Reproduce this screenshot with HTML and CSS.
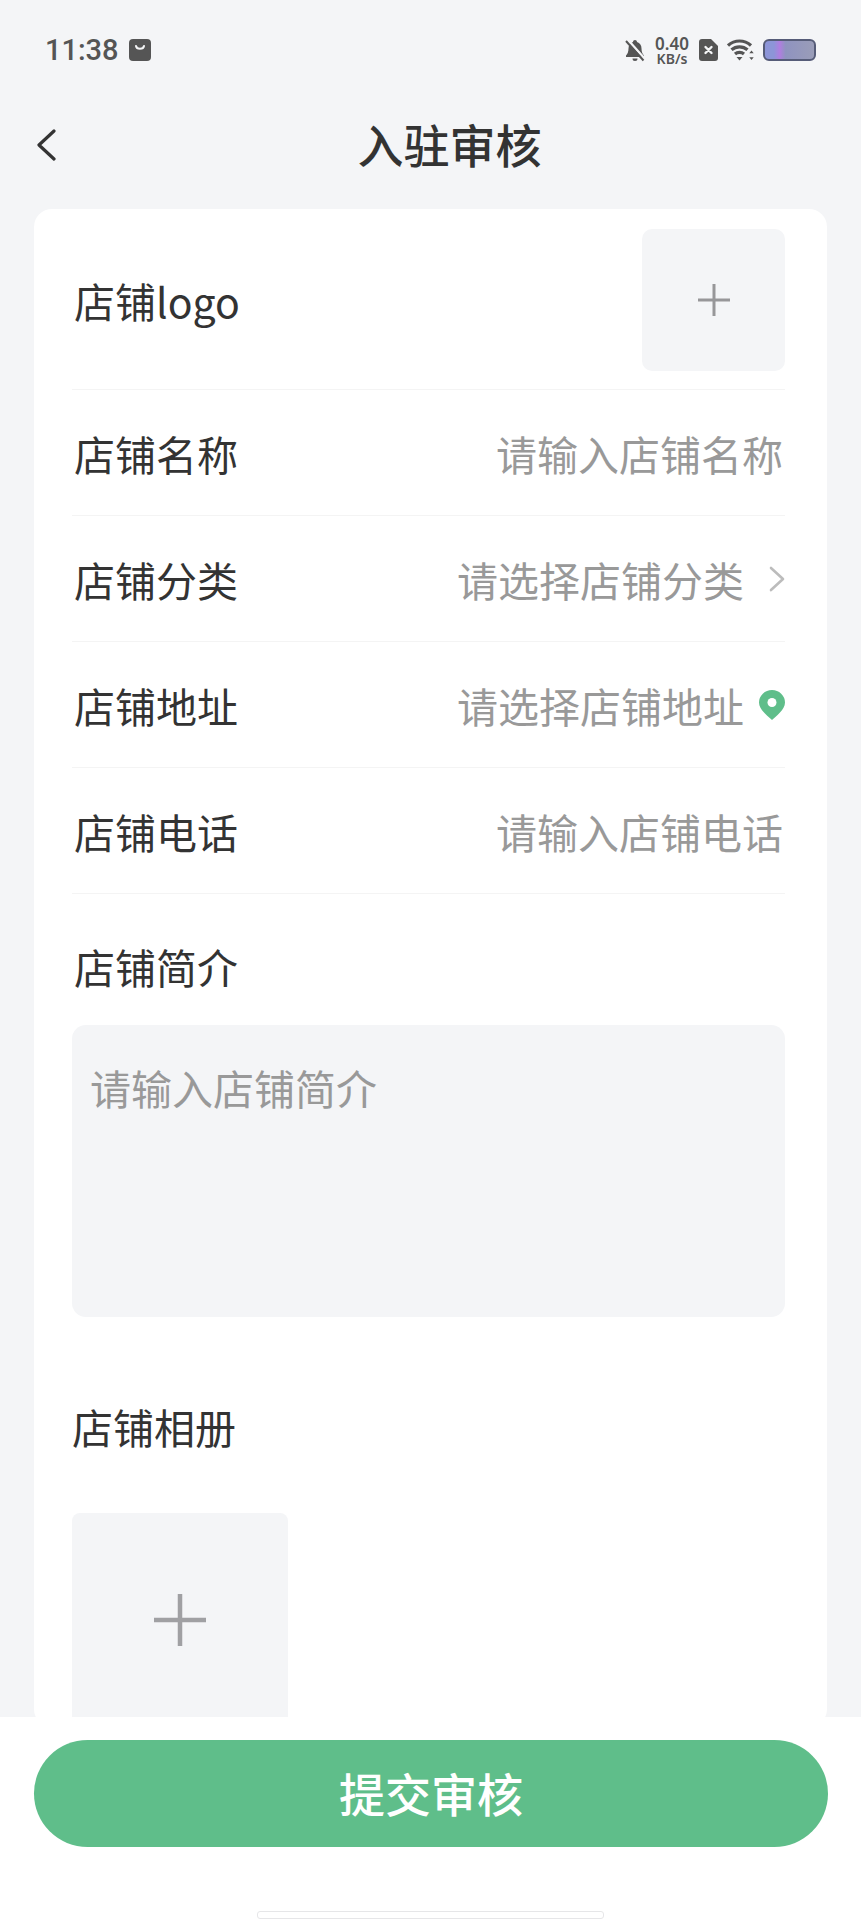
FILE: index.html
```html
<!DOCTYPE html>
<html lang="zh-CN">
<head>
    <meta charset="UTF-8">
    <meta name="viewport" content="width=device-width, initial-scale=1.0">
    <title>入驻审核</title>
    <link rel="stylesheet" href="styles.css">
</head>
<body>
    <div class="page">
        <div class="status-bar">
            <span class="time">11:38</span>
            <svg class="bag" width="22" height="22" viewBox="0 0 22 22">
                <rect width="22" height="22" rx="4" fill="#555"/>
                <path d="M7 7c.6 3.6 7.4 3.6 8 0" fill="none" stroke="#f4f5f7" stroke-width="2" stroke-linecap="round"/>
            </svg>
            <div class="status-right">
                <svg width="20" height="23" viewBox="0 0 20 23">
                    <path d="M8 3c0-1.200 .9-2 2-2s2 .8 2 2c3 1 4.500 3.500 4.500 6.500 0 3.500 1 5.500 2.500 7v1.500H1V16.500c1.500-1.500 2.500-3.500 2.500-7C3.500 6.500 5 4 8 3z" fill="#555"/>
                    <path d="M7.500 19.500h5a2.500 2.500 0 0 1-5 0z" fill="#555"/>
                    <path d="M2.500 .5l17 19" stroke="#f4f5f7" stroke-width="2.500"/>
                    <path d="M1 2l17.500 19.500" stroke="#555" stroke-width="2"/>
                </svg>
                <div class="speed">
                    <span class="speed-num">0.40</span>
                    <span class="speed-unit">KB/s</span>
                </div>
                <svg width="19" height="22" viewBox="0 0 19 22">
                    <path d="M3 0h9l7 7v12a3 3 0 0 1-3 3H3a3 3 0 0 1-3-3V3a3 3 0 0 1 3-3z" fill="#555"/>
                    <path d="M6.500 8l6 6M12.500 8l-6 6" stroke="#f4f5f7" stroke-width="2.400" stroke-linecap="round"/>
                </svg>
                <svg width="27" height="22" viewBox="0 0 27 22">
                    <path d="M1 6.500c6.500-6 16.500-6 23 0" fill="none" stroke="#555" stroke-width="3.200"/>
                    <path d="M4.500 10.800c4.500-4 11.500-4 16 0" fill="none" stroke="#555" stroke-width="3.200"/>
                    <path d="M8 15c2.500-2.200 6.500-2.200 9 0" fill="none" stroke="#555" stroke-width="3.200"/>
                    <path d="M9.500 18h6l-3 3.500z" fill="#555"/>
                    <path d="M24.500 11.500l-2.200 2.800h4.400zM24.500 21l-2.200-2.800h4.400z" fill="#555"/>
                </svg>
                <div class="battery"></div>
            </div>
        </div>

        <div class="nav">
            <svg class="back" width="20" height="32" viewBox="0 0 20 32">
                <path d="M18 2L3 16l15 14" fill="none" stroke="#333" stroke-width="3.200" stroke-linecap="round" stroke-linejoin="round"/>
            </svg>
            <h1 class="nav-title">入驻审核</h1>
        </div>

        <div class="card">
            <div class="row row-logo">
                <span class="label">店铺logo</span>
                <div class="logo-upload">
                    <svg width="32" height="32" viewBox="0 0 32 32">
                        <path d="M16 0v32M0 16h32" stroke="#979799" stroke-width="3"/>
                    </svg>
                </div>
            </div>
            <div class="row">
                <span class="label">店铺名称</span>
                <span class="hint">请输入店铺名称</span>
            </div>
            <div class="row">
                <span class="label">店铺分类</span>
                <div class="value">
                    <span class="hint">请选择店铺分类</span>
                    <svg class="arrow" width="16" height="26" viewBox="0 0 16 26">
                        <path d="M2 2l12 11L2 24" fill="none" stroke="#bcbcbc" stroke-width="2.600" stroke-linecap="round" stroke-linejoin="round"/>
                    </svg>
                </div>
            </div>
            <div class="row">
                <span class="label">店铺地址</span>
                <div class="value">
                    <span class="hint">请选择店铺地址</span>
                    <svg class="pin" width="26" height="30" viewBox="0 0 26 30">
                        <path d="M13 30C9 26 0 20 0 12.500A13 12.500 0 0 1 26 12.500C26 20 17 26 13 30z" fill="#5fbe8a"/>
                        <circle cx="13" cy="12.500" r="4.500" fill="#fff"/>
                    </svg>
                </div>
            </div>
            <div class="row">
                <span class="label">店铺电话</span>
                <span class="hint">请输入店铺电话</span>
            </div>

            <div class="section-label intro-label">店铺简介</div>
            <div class="intro-box">请输入店铺简介</div>

            <div class="section-label album-label">店铺相册</div>
            <div class="album-upload">
                <svg width="52" height="52" viewBox="0 0 52 52">
                    <path d="M26 0v52M0 26h52" stroke="#a0a0a3" stroke-width="4.500"/>
                </svg>
            </div>
        </div>

        <div class="bottom-bar">
            <button class="submit">提交审核</button>
            <div class="home-bar"></div>
        </div>
    </div>
</body>
</html>
```

FILE: styles.css
```css
* {
    box-sizing: border-box;
}
body {
    margin: 0;
    background-color: #f4f5f7;
    font-family: "Noto Sans CJK SC", "Noto Sans", sans-serif;
    color: #333;
}
.page {
    position: relative;
    height: 1920px;
    overflow: hidden;
}

/* status bar */
.status-bar {
    display: flex;
    align-items: center;
    height: 100px;
    padding: 0 45px;
    color: #555;
}
.time {
    font-family: Roboto, sans-serif;
    font-size: 29px;
    font-weight: 500;
}
.bag {
    margin-left: 10px;
}
.status-right {
    display: flex;
    align-items: center;
    gap: 9px;
    margin-left: auto;
}
.speed {
    display: flex;
    flex-direction: column;
    align-items: center;
    font-family: "Noto Sans", sans-serif;
    font-weight: 600;
    width: 36px;
}
.speed-num {
    font-size: 17px;
    line-height: 17px;
}
.speed-unit {
    font-size: 14px;
    line-height: 13px;
}
.battery {
    width: 53px;
    height: 22px;
    border: 2px solid #565c78;
    border-radius: 6px;
    background: linear-gradient(90deg, #8d95d8 0%, #8d95d8 18%, #b07ee0 30%, #8f93c0 42%, #9a9db8 100%);
}

/* nav */
.nav {
    display: flex;
    align-items: center;
    height: 90px;
    padding: 0 18px 0 36px;
}
.nav-title {
    flex: 1;
    margin: -5px 0 0;
    text-align: center;
    font-size: 46px;
    font-weight: 500;
    line-height: 60px;
}

/* form card */
.card {
    margin: 19px 34px 0;
    padding: 0 42px 0 38px;
    background-color: #fff;
    border-radius: 18px;
}
.row {
    display: flex;
    justify-content: space-between;
    align-items: center;
    height: 126px;
    border-bottom: 1px solid #f4f4f4;
}
.row-logo {
    height: 181px;
    padding-top: 2px;
}
.label,
.hint,
.section-label,
.intro-box {
    font-size: 41px;
    line-height: 56px;
}
.label {
    padding-left: 2px;
}
.row > .hint,
.value .hint {
    margin-right: 2px;
}
.hint,
.intro-box {
    color: #999;
}
.value {
    display: flex;
    align-items: center;
}
.arrow {
    margin-left: 23px;
}
.pin {
    margin-left: 13px;
}
.logo-upload {
    display: flex;
    justify-content: center;
    align-items: center;
    width: 143px;
    height: 142px;
    background-color: #f4f5f7;
    border-radius: 10px;
}
.intro-label {
    margin-top: 44px;
    padding-left: 2px;
}
.intro-box {
    height: 292px;
    margin-top: 31px;
    padding: 34px 18px 0;
    background-color: #f4f5f7;
    border-radius: 14px;
}
.album-label {
    margin-top: 81px;
}
.album-upload {
    display: flex;
    justify-content: center;
    align-items: center;
    width: 216px;
    height: 214px;
    margin-top: 59px;
    background-color: #f4f5f7;
    border-radius: 8px;
}

/* fixed bottom */
.bottom-bar {
    position: absolute;
    left: 0;
    right: 0;
    bottom: 0;
    height: 203px;
    padding: 23px 33px 0 34px;
    background-color: #fff;
}
.submit {
    display: block;
    width: 100%;
    height: 107px;
    padding: 0 0 4px;
    border: 0;
    border-radius: 54px;
    background-color: #5fbe8a;
    color: #fff;
    font-family: inherit;
    font-size: 46px;
    font-weight: 500;
}
.home-bar {
    width: 347px;
    height: 8px;
    margin: 64px auto 0 223px;
    background-color: #fff;
    border: 1px solid #e6e6e8;
    border-radius: 3px;
}
```
